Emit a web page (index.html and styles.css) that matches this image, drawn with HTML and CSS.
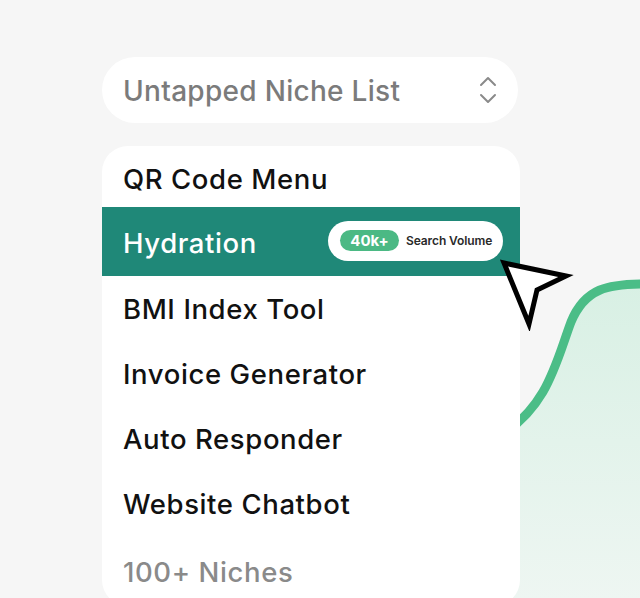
FILE: index.html
```html
<!DOCTYPE html>
<html>
<head>
<meta charset="utf-8">
<link rel="stylesheet" href="styles.css">
</head>
<body>
<svg class="deco" width="640" height="598" viewBox="0 0 640 598">
  <defs>
    <linearGradient id="gfill" x1="0" y1="0" x2="0" y2="1">
      <stop offset="0" stop-color="#d8f0e4"/>
      <stop offset="1" stop-color="#eef6f2"/>
    </linearGradient>
  </defs>
  <path d="M 500 436 C 548 406, 556 362, 571 322 C 585 288, 608 284, 645 284 L 645 600 L 500 600 Z" fill="url(#gfill)"/>
  <path d="M 500 436 C 548 406, 556 362, 571 322 C 585 288, 608 284, 645 284" fill="none" stroke="#4bbd87" stroke-width="9"/>
</svg>
<main class="panel">
  <div class="select">
    <span class="select-label">Untapped Niche List</span>
    <svg class="chevrons" width="18" height="28" viewBox="0 0 18 28">
      <path d="M2 9 L9 2 L16 9" fill="none" stroke="#8a8a8a" stroke-width="2" stroke-linecap="round" stroke-linejoin="round"/>
      <path d="M2 19 L9 26 L16 19" fill="none" stroke="#8a8a8a" stroke-width="2" stroke-linecap="round" stroke-linejoin="round"/>
    </svg>
  </div>
  <ul class="list">
    <li class="item item-first">QR Code Menu</li>
    <li class="item item-active">
      <span>Hydration</span>
      <span class="badge"><span class="badge-num">40k+</span><span class="badge-text">Search Volume</span></span>
      <svg class="cursor" width="80" height="72" viewBox="0 0 80 72">
        <path d="M4 4 L66 17 L37 31 L29 65 Z" fill="#ffffff" stroke="#000000" stroke-width="5" stroke-linejoin="miter"/>
      </svg>
    </li>
    <li class="item">BMI Index Tool</li>
    <li class="item">Invoice Generator</li>
    <li class="item">Auto Responder</li>
    <li class="item">Website Chatbot</li>
    <li class="item item-muted">100+ Niches</li>
  </ul>
</main>
</body>
</html>
```
FILE: styles.css
```css
html, body {
  margin: 0;
  padding: 0;
}
body {
  width: 640px;
  height: 598px;
  overflow: hidden;
  background: #f6f6f6;
  font-family: "Inter", "Noto Sans", sans-serif;
  position: relative;
}
.deco {
  position: absolute;
  left: 0;
  top: 0;
}
.panel {
  position: relative;
  width: 418px;
  margin-left: 102px;
  padding-top: 57px;
  display: flex;
  flex-direction: column;
  gap: 23px;
}
.select {
  width: 416px;
  height: 66px;
  box-sizing: border-box;
  background: #ffffff;
  border-radius: 33px;
  display: flex;
  align-items: center;
  justify-content: space-between;
  padding: 0 21px 0 21px;
}
.select-label {
  font-size: 28px;
  font-weight: 500;
  color: #7b7b7b;
  letter-spacing: 0.3px;
  padding-top: 2px;
}
.chevrons {
  display: block;
}
.list {
  list-style: none;
  margin: 0;
  padding: 0;
  background: #ffffff;
  border-radius: 26px;
  height: 460px;
}
.item {
  height: 65px;
  display: flex;
  align-items: center;
  padding-left: 21px;
  font-size: 27.5px;
  font-weight: 500;
  color: #111111;
  letter-spacing: 0.6px;
  position: relative;
}
.item-first {
  height: 61px;
  padding-top: 4px;
  box-sizing: border-box;
}
.item-active {
  height: 69px;
  background: #1f8878;
  color: #ffffff;
  padding-top: 3px;
  box-sizing: border-box;
  justify-content: space-between;
  padding-right: 17px;
}
.item-muted {
  color: #8a8a8a;
  height: 72px;
}
.badge {
  display: flex;
  align-items: center;
  gap: 7px;
  height: 40px;
  width: 175px;
  box-sizing: border-box;
  background: #ffffff;
  border-radius: 20px;
  padding-left: 12px;
  margin-top: -5px;
  letter-spacing: 0;
}
.badge-num {
  background: #4bb984;
  color: #ffffff;
  font-size: 15px;
  font-weight: 700;
  height: 21px;
  width: 59px;
  border-radius: 11px;
  display: flex;
  align-items: center;
  justify-content: center;
}
.badge-text {
  font-size: 12px;
  font-weight: 600;
  color: #2a2a2a;
  letter-spacing: -0.1px;
}
.cursor {
  position: absolute;
  left: 398px;
  top: 52px;
}
```
